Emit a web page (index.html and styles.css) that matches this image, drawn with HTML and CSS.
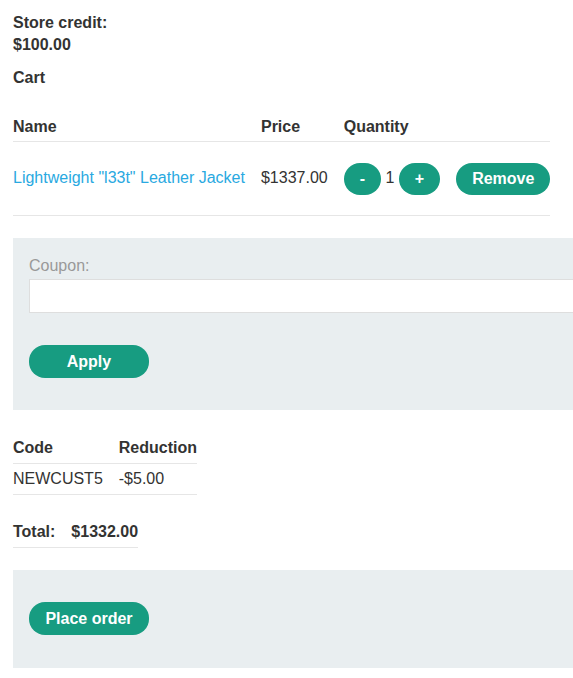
FILE: index.html
```html
<!DOCTYPE html>
<html lang="en">
<head>
<meta charset="utf-8">
<title>Cart</title>
<link rel="stylesheet" href="styles.css">
</head>
<body>
<div class="page">
  <p class="credit"><strong>Store credit:<br>$100.00</strong></p>
  <p class="cart-title"><strong>Cart</strong></p>
  <table class="grid cart">
    <thead>
      <tr><th>Name</th><th>Price</th><th>Quantity</th><th></th></tr>
    </thead>
    <tbody>
      <tr>
        <td><a class="link" href="#">Lightweight "l33t" Leather Jacket</a></td>
        <td>$1337.00</td>
        <td><button class="button">-</button> 1 <button class="button">+</button></td>
        <td><button class="button">Remove</button></td>
      </tr>
    </tbody>
  </table>

  <form class="panel coupon">
    <label class="coupon-label" for="coupon">Coupon:</label>
    <input class="coupon-input" id="coupon" type="text">
    <button class="button wide" type="button">Apply</button>
  </form>

  <table class="grid discounts">
    <tr><th>Code</th><th>Reduction</th></tr>
    <tr><td>NEWCUST5</td><td>-$5.00</td></tr>
  </table>

  <table class="grid total">
    <tr><th>Total:</th><th>$1332.00</th></tr>
  </table>

  <form class="panel order">
    <button class="button wide" type="button">Place order</button>
  </form>
</div>
</body>
</html>
```

FILE: styles.css
```css
html, body {
  margin: 0;
  padding: 0;
  background: #ffffff;
  overflow-x: hidden;
}

body {
  font-family: "Liberation Sans", Arial, sans-serif;
  font-size: 16px;
  line-height: 1.4;
  color: #333332;
}

.page {
  padding: 12px 0 40px 13px;
  overflow: hidden;
}

.credit {
  margin: 0 0 10px;
}

.cart-title {
  margin: 0 0 21px;
}

.grid {
  border-collapse: collapse;
  border-spacing: 0;
}

.grid th,
.grid td {
  text-align: left;
  padding: 4px 16px 4px 0;
  border-bottom: 1px solid #e6e6e6;
  white-space: nowrap;
}

.grid th:last-child,
.grid td:last-child {
  padding-right: 0;
}

.grid th {
  font-weight: bold;
}

.cart {
  width: 537px;
  margin-bottom: 22px;
}

.cart thead th {
  padding-top: 6px;
  padding-bottom: 2px;
}

.cart tbody td {
  padding-top: 21px;
  padding-bottom: 20px;
  vertical-align: middle;
}

.link {
  color: #29a9e1;
  text-decoration: none;
}

.button {
  display: inline-block;
  vertical-align: middle;
  height: 32px;
  padding: 0 16px;
  border: 0;
  border-radius: 16px;
  background: #179c81;
  color: #ffffff;
  font-family: "Liberation Sans", Arial, sans-serif;
  font-size: 16px;
  font-weight: bold;
  line-height: 32px;
  cursor: pointer;
}

.button.wide {
  min-width: 120px;
  height: 33px;
  line-height: 33px;
}

.panel {
  display: flex;
  flex-direction: column;
  align-items: flex-start;
  width: 600px;
  background: #e9eef0;
  margin: 0;
}

.coupon {
  padding: 17px 0 32px 16px;
  margin-bottom: 23px;
}

.coupon-label {
  color: #999999;
  margin-bottom: 2px;
}

.coupon-input {
  box-sizing: border-box;
  width: 584px;
  height: 34px;
  margin: 0 0 32px;
  border: 1px solid #dedede;
  background: #ffffff;
  padding: 0 8px;
  font: inherit;
}

.discounts {
  margin-bottom: 22px;
}

.discounts td {
  padding-bottom: 3px;
}

.total {
  margin-bottom: 22px;
}

.order {
  padding: 32px 0 33px 16px;
}
```
